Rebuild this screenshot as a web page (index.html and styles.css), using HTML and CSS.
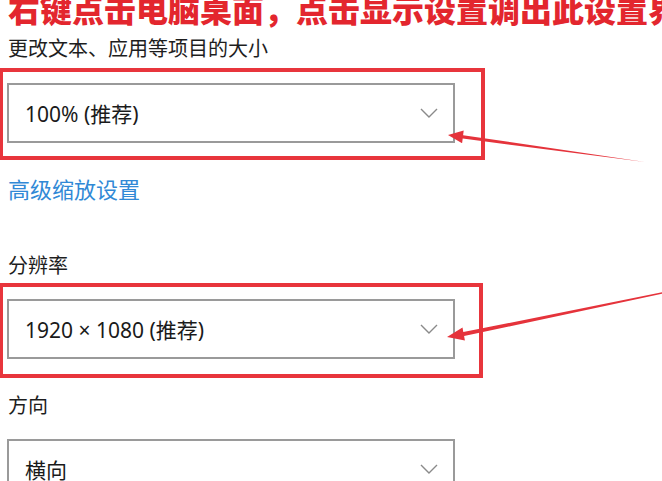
FILE: index.html
```html
<!DOCTYPE html>
<html lang="zh-CN">
<head>
    <meta charset="UTF-8">
    <title>显示设置</title>
    <link rel="stylesheet" href="styles.css">
</head>
<body>
    <div class="page">
        <div class="title">右键点击电脑桌面，点击显示设置调出此设置界面</div>

        <div class="label first">更改文本、应用等项目的大小</div>
        <div class="highlight">
            <div class="select">
                <span>100% (推荐)</span>
                <svg class="chevron" viewBox="0 0 18 10"><polyline points="1,1 9,9 17,1"/></svg>
            </div>
        </div>

        <a class="link" href="#">高级缩放设置</a>

        <div class="label res">分辨率</div>
        <div class="highlight second">
            <div class="select">
                <span>1920 × 1080 (推荐)</span>
                <svg class="chevron" viewBox="0 0 18 10"><polyline points="1,1 9,9 17,1"/></svg>
            </div>
        </div>

        <div class="label dir">方向</div>
        <div class="select plain">
            <span>横向</span>
            <svg class="chevron" viewBox="0 0 18 10"><polyline points="1,1 9,9 17,1"/></svg>
        </div>

        <!-- annotation arrows -->
        <svg class="arrows" viewBox="0 0 662 481">
            <polygon points="448,135 463.7,130.5 463.1,135.2 645,162 462.7,138.6 462.1,143.3"/>
            <polygon points="447,337 462.5,327.6 463.3,332.1 662,292.3 662,293.7 464.1,336.1 464.9,340.6"/>
        </svg>
    </div>
</body>
</html>
```

FILE: styles.css
```css
html, body {
    margin: 0;
    padding: 0;
    background: #ffffff;
}

.page {
    position: relative;
    display: flow-root;
    width: 662px;
    height: 481px;
    overflow: hidden;
    font-family: "Noto Sans", "Noto Sans CJK SC", sans-serif;
    color: #222;
}

.title {
    margin-top: -12px;
    padding-left: 8px;
    font-family: "Noto Sans CJK SC", sans-serif;
    font-size: 32px;
    font-weight: 900;
    line-height: 40px;
    color: #e3262e;
    white-space: nowrap;
}

.label {
    padding-left: 8px;
    font-size: 20px;
    line-height: 28px;
    color: #1e1e1e;
}

.label.first {
    margin-top: 7px;
    margin-bottom: 5px;
}

.label.res {
    margin-top: 49px;
    margin-bottom: 3px;
}

.label.dir {
    margin-top: 14px;
    margin-bottom: 19px;
}

.highlight {
    width: fit-content;
    border: 4px solid #e8353c;
    border-left-width: 3px;
    padding: 11px 26px 13px 4px;
}

.highlight.second {
    padding: 12px 24px 15px 4px;
}

.select {
    box-sizing: border-box;
    width: 448px;
    height: 60px;
    border: 2px solid #9a9a9a;
    padding: 0 15px 0 16px;
    display: flex;
    align-items: center;
    justify-content: space-between;
    font-size: 21px;
    color: #1a1a1a;
}

.select.plain {
    margin-left: 7px;
}

.chevron {
    width: 18px;
    height: 10px;
    fill: none;
    stroke: #8a8a8a;
    stroke-width: 1.4;
}

.link {
    display: block;
    margin-top: 15px;
    padding-left: 8px;
    font-size: 22px;
    line-height: 28px;
    color: #3189d6;
    text-decoration: none;
}

.arrows {
    position: absolute;
    left: 0;
    top: 0;
    width: 662px;
    height: 481px;
    fill: #e5333b;
}
```
